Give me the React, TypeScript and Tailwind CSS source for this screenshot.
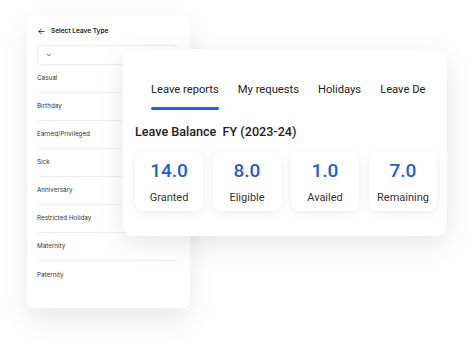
import { ArrowLeft, ChevronDown } from "lucide-react";

const leaveTypes = [
  "Casual",
  "Birthday",
  "Earned/Privileged",
  "Sick",
  "Anniversary",
  "Restricted Holiday",
  "Maternity",
  "Paternity",
];

const stats = [
  { value: "14.0", label: "Granted" },
  { value: "8.0", label: "Eligible" },
  { value: "1.0", label: "Availed" },
  { value: "7.0", label: "Remaining" },
];

const tabs = ["Leave reports", "My requests", "Holidays", "Leave De"];

export default function App() {
  return (
    <div className="relative h-[346px] w-[474px] overflow-hidden bg-white">
      {/* leave type picker */}
      <div className="ml-[27px] mt-[16px] h-[292px] w-[163px] rounded-[8px] bg-white pl-[10px] pr-[13px] pt-[11px] shadow-[0_12px_30px_rgba(0,0,0,0.09)] [font-family:Inter,sans-serif]">
        <div className="flex items-center gap-[5px] text-[#222]">
          <ArrowLeft size={9} strokeWidth={2.2} />
          <span className="text-[6.5px] font-semibold">Select Leave Type</span>
        </div>
        <div className="mt-[8px] flex h-[20px] items-center rounded-[4px] border border-[#eceef2] pl-[8px]">
          <ChevronDown size={6} strokeWidth={3} className="text-[#333]" />
        </div>
        <ul>
          {leaveTypes.map((t, i) => (
            <li
              key={t}
              className={`flex h-[28px] items-center pt-[1px] text-[6.3px] text-[#333] ${
                i < leaveTypes.length - 1 ? "border-b border-[#f1f2f4]" : ""
              }`}
            >
              {t}
            </li>
          ))}
        </ul>
      </div>

      {/* leave reports panel */}
      <div className="absolute left-[123px] top-[49px] h-[187px] w-[324px] overflow-hidden rounded-[10px] bg-white shadow-[0_8px_28px_rgba(0,0,0,0.10)] [font-family:Roboto,sans-serif]">
        <div className="flex gap-[19px] pl-[28px] pt-[33px] text-[11.2px] text-[#222]">
          {tabs.map((t, i) => (
            <div key={t} className="flex flex-col">
              <span className="whitespace-nowrap leading-[15px]">{t}</span>
              {i === 0 && <div className="mt-[10px] h-[3px] rounded-full bg-[#1f63cc]" />}
            </div>
          ))}
        </div>
        <div className="mt-[14px] whitespace-nowrap pl-[12px] text-[12.6px] font-medium leading-[16px] text-[#222]">
          Leave Balance&nbsp; FY (2023-24)
        </div>
        <div className="mt-[12px] flex gap-[10px] pl-[12px]">
          {stats.map((s) => (
            <div
              key={s.label}
              className="flex h-[59px] w-[68px] flex-col items-center rounded-[8px] bg-white pt-[8px] shadow-[0_2px_10px_rgba(0,0,0,0.08)]"
            >
              <span className="text-[19px] font-medium leading-[22px] text-[#1f5fc8]">{s.value}</span>
              <span className="mt-[9px] text-[11px] leading-[14px] text-[#333]">{s.label}</span>
            </div>
          ))}
        </div>
      </div>
    </div>
  );
}
